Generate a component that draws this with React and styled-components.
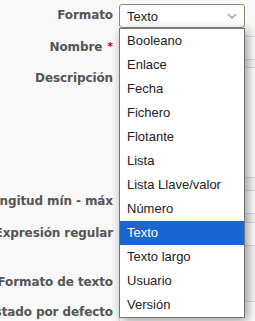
import React from 'react'
import styled, { createGlobalStyle } from 'styled-components'

const GlobalStyle = createGlobalStyle`
  body {
    margin: 0;
    background: #f8f8f8;
    overflow: hidden;
  }
`

const Form = styled.div`
  display: flex;
  flex-direction: column;
  padding-top: 4px;
  width: 255px;
  height: 321px;
  overflow: hidden;
`

const Row = styled.div`
  display: grid;
  grid-template-columns: 113px 1fr;
  column-gap: 6px;
  align-items: ${props => (props.top ? 'start' : 'center')};
  margin-top: ${props => props.gap || 0}px;
`

const Label = styled.div`
  display: flex;
  justify-content: flex-end;
  white-space: nowrap;
  font-family: 'DejaVu Sans', Verdana, sans-serif;
  font-weight: bold;
  font-size: 12px;
  letter-spacing: -0.1px;
  color: #555;
  padding-top: ${props => props.offset || 0}px;
  padding-bottom: 2px;
`

const Required = styled.span`
  color: #c00;
  margin-left: 5px;
  font-size: 11px;
`

const Field = styled.div`
  position: relative;
`

const Input = styled.div`
  box-sizing: border-box;
  width: 300px;
  height: ${props => props.height || 24}px;
  background: #fff;
  border: 1px solid #ddd;
  border-radius: 2px;
`

const Select = styled.div`
  box-sizing: border-box;
  width: 126px;
  height: 24px;
  display: flex;
  align-items: center;
  justify-content: space-between;
  padding: 0 7px 0 7px;
  background: #fff;
  border: 1px solid #8c8a6c;
  border-radius: 3px;
  font-family: 'Liberation Sans', Arial, sans-serif;
  font-size: 13px;
  color: #222;
`

const Chevron = () => (
  <svg width="10" height="6" viewBox="0 0 10 6">
    <path d="M1 1l4 4 4-4" fill="none" stroke="#999" strokeWidth="1.3" />
  </svg>
)

const Menu = styled.ul`
  position: absolute;
  top: 24px;
  left: 0;
  z-index: 5;
  box-sizing: border-box;
  width: 126px;
  margin: 0;
  padding: 0;
  list-style: none;
  background: #fff;
  border: 1px solid #767676;
  box-shadow: 3px 3px 10px rgba(0, 0, 0, 0.4);
`

const Option = styled.li`
  height: 24px;
  line-height: 24px;
  padding-left: 7px;
  white-space: nowrap;
  font-family: 'Liberation Sans', Arial, sans-serif;
  font-size: 13px;
  color: ${props => (props.selected ? '#fff' : '#222')};
  background: ${props => (props.selected ? '#1a66d3' : 'transparent')};
`

const options = [
  'Booleano',
  'Enlace',
  'Fecha',
  'Fichero',
  'Flotante',
  'Lista',
  'Lista Llave/valor',
  'Número',
  'Texto',
  'Texto largo',
  'Usuario',
  'Versión'
]

export default function App() {
  return (
    <>
      <GlobalStyle />
      <Form>
        <Row>
          <Label>Formato</Label>
          <Field>
            <Select>
              Texto
              <Chevron />
            </Select>
            <Menu>
              {options.map(o => (
                <Option key={o} selected={o === 'Texto'}>
                  {o}
                </Option>
              ))}
            </Menu>
          </Field>
        </Row>
        <Row gap={8}>
          <Label>
            Nombre<Required>*</Required>
          </Label>
          <Field>
            <Input />
          </Field>
        </Row>
        <Row gap={7} top>
          <Label offset={4}>Descripción</Label>
          <Field>
            <Input height={111} />
          </Field>
        </Row>
        <Row gap={12}>
          <Label>Longitud mín - máx</Label>
          <Field>
            <Input />
          </Field>
        </Row>
        <Row gap={8}>
          <Label>Expresión regular</Label>
          <Field>
            <Input />
          </Field>
        </Row>
        <Row gap={29}>
          <Label>Formato de texto</Label>
          <Field />
        </Row>
        <Row gap={10}>
          <Label>Estado por defecto</Label>
          <Field>
            <Input />
          </Field>
        </Row>
      </Form>
    </>
  )
}
